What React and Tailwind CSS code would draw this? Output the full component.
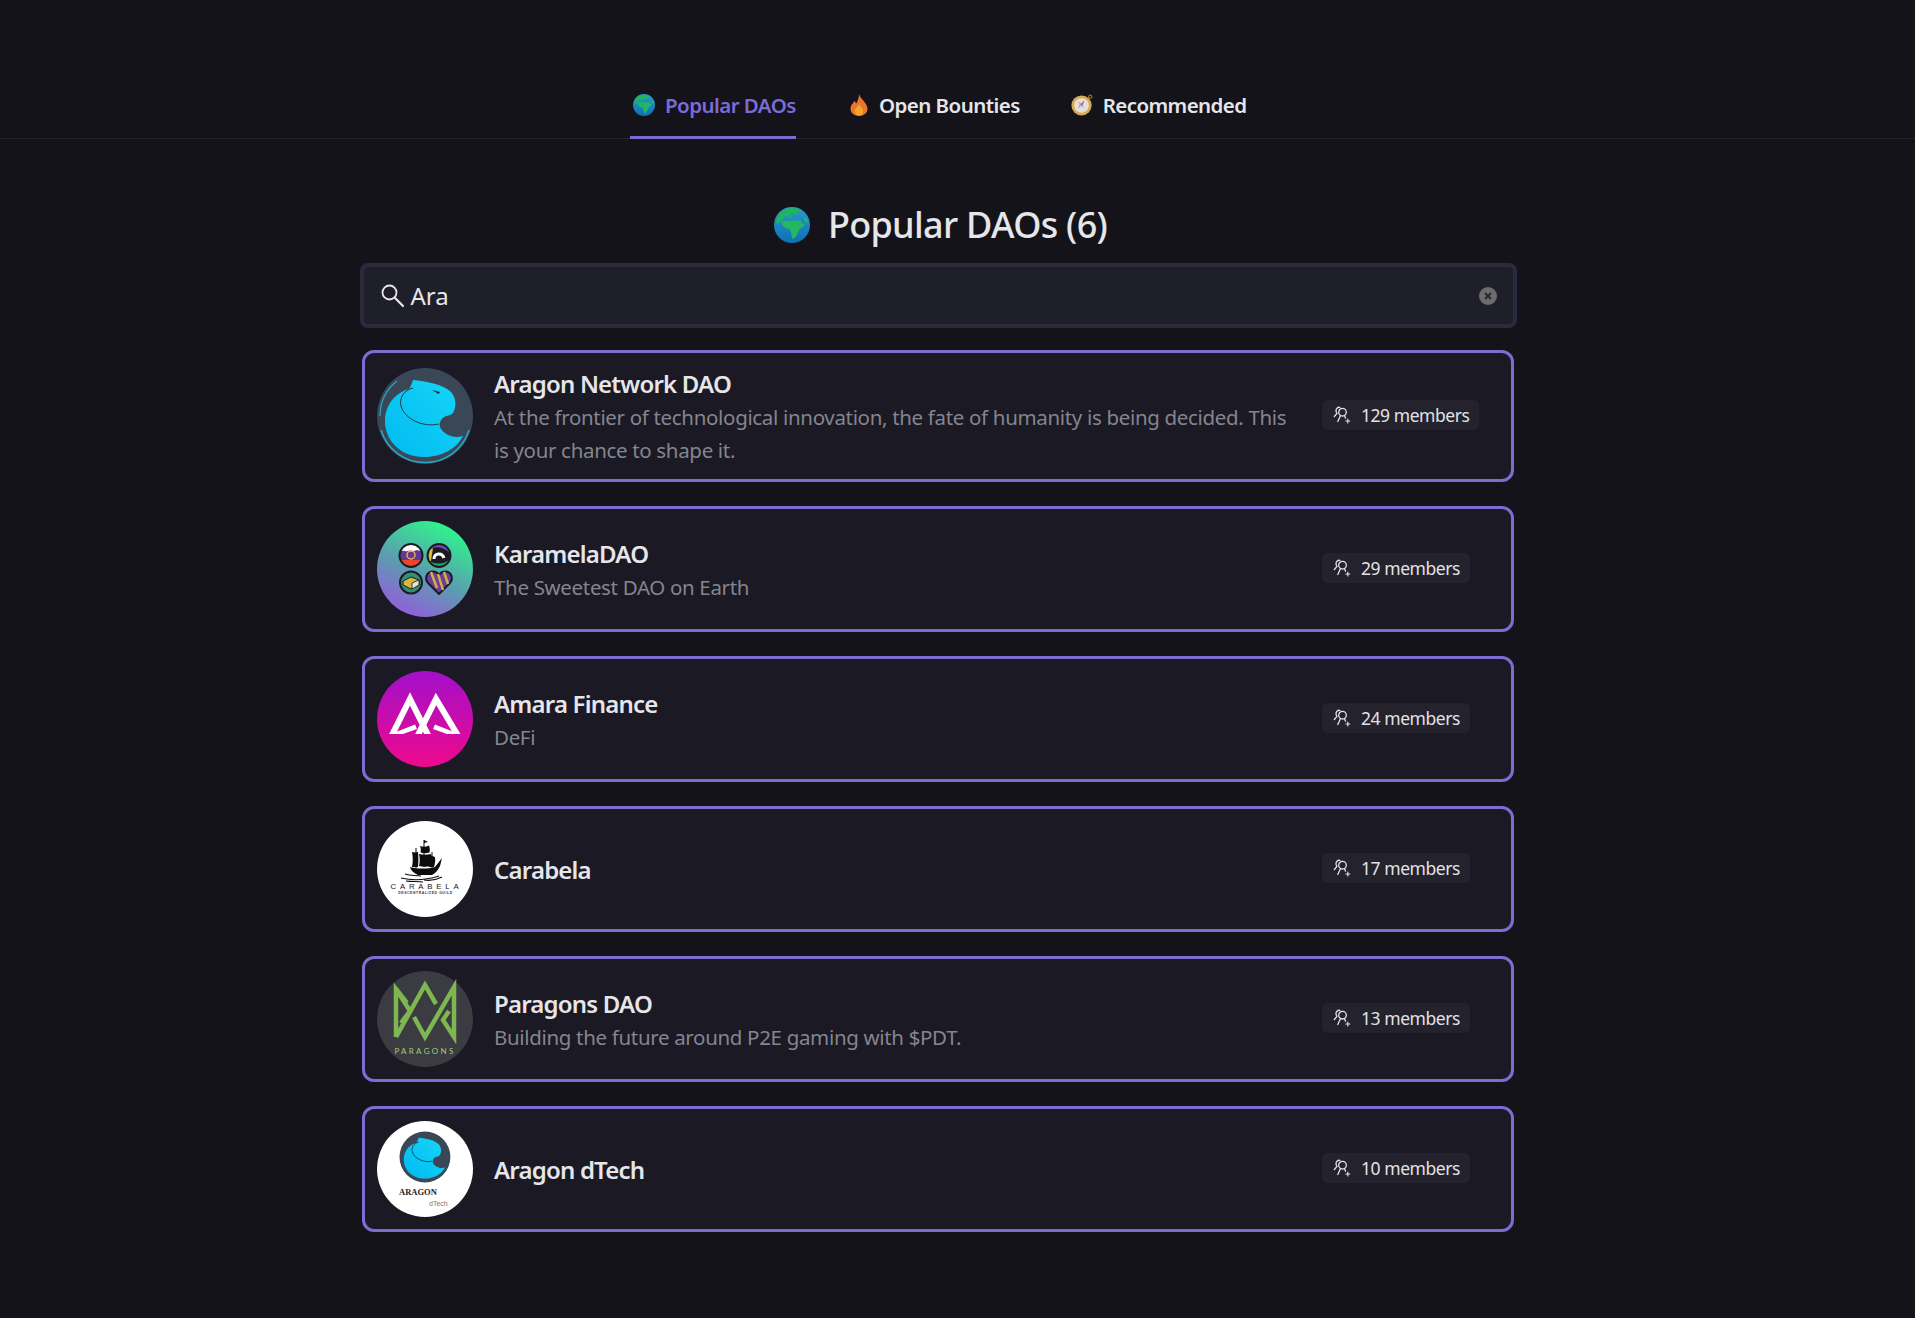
const GlobeIcon = ({ className }) => (
  <svg className={className} viewBox="0 0 36 36">
    <defs>
      <linearGradient id="ocean" x1="0" y1="0" x2="0" y2="1">
        <stop offset="0" stopColor="#2a9ad0" />
        <stop offset="1" stopColor="#0f6fb5" />
      </linearGradient>
    </defs>
    <circle cx="18" cy="18" r="18" fill="url(#ocean)" />
    <path d="M9 3.5C13 1 20 0 26 2.5L27 5l-3 .5L22 8l-4-1.500-1.500 1.500 2 2-4 1-1.500-2-3 1-1 3-4 2.500L2 17C2 11 5 6 9 3.500Z" fill="#1fb45f" />
    <path d="M7 15l5-1.500 5 .5 3-1 4 1 2.500-1 1 3 3 1-1.500 3-3 1-2 5-3 5-2.500 1-1.500-6-1-4-4-.5-3.500-3Z" fill="#22b85f" />
    <path d="M30 10l3 2 1.500 4-2.500-.5-2-2.500Z" fill="#22b85f" />
  </svg>
)

const FireIcon = ({ className }) => (
  <svg className={className} viewBox="0 0 20 26">
    <path d="M10 0c1 4 4 6 6.500 9.500C19 13 20 15.500 20 17.500 20 22.500 15.500 26 10 26S0 22.500 0 17.500C0 13 3 11 5 8c.5 1.500 1 2.500 2 3C8.500 8 10 4 10 0Z" fill="#e8762c" />
    <path d="M10 12c1 2.500 5 5 5 8.500 0 3-2.200 5-5 5s-5-2-5-5c0-3.500 4-5.500 5-8.500Z" fill="#f7a32c" />
  </svg>
)

const CompassIcon = ({ className }) => (
  <svg className={className} viewBox="0 0 24 24">
    <circle cx="21" cy="3" r="1.800" fill="none" stroke="#c89a3a" strokeWidth="1" />
    <circle cx="11.500" cy="12.500" r="11" fill="#d9ab4f" />
    <circle cx="11.500" cy="12.500" r="8" fill="#e4e0dc" />
    <path d="M14.500 7l-2 5.500 2.500 3-4-2.500-3.500 3 2-5-2.500-3 4 2Z" fill="#a9a7ae" />
    <path d="M14.500 7l-3.500 4.500 1.500 1Z" fill="#c0436a" />
  </svg>
)

const MembersIcon = () => (
  <svg className="w-[18px] h-[18px] shrink-0" viewBox="0 0 18 18" fill="none" stroke="#e4e4e8" strokeWidth="1.300" strokeLinecap="round" strokeLinejoin="round">
    <circle cx="9.500" cy="6.200" r="3.800" />
    <path d="M7.500 9.500L4.800 15.500M11.500 9.500l1 2.700" />
    <path d="M6.800 1.300C4.500 1 2.800 2.800 3 5c.1 1 .5 1.700 1 2.300L1.300 10.500" />
    <path d="M14.800 13v4M12.800 15h4" strokeWidth="1.100" />
  </svg>
)

const AragonLogo = () => (
  <svg className="w-24 h-24 shrink-0" viewBox="0 0 96 96">
    <defs>
      <linearGradient id="aragonBody" x1="1" y1="0" x2="0" y2="1">
        <stop offset="0" stopColor="#16d6f6" />
        <stop offset="1" stopColor="#00b9f2" />
      </linearGradient>
    </defs>
    <circle cx="48" cy="48" r="48" fill="#3a4756" />
    <path d="M4 62A46 46 0 0 0 92 62" fill="none" stroke="#27a9c6" strokeWidth="1.500" />
    <path d="M3 48A45 45 0 0 1 20 13" fill="none" stroke="#27a9c6" strokeWidth="1.200" />
    <path d="M36 12C48 13 66 16 74 24C79 30 80 38 76 45C74 47 71 48 69 48C64 50 62 55 63 59C66 66 76 71 86 68C80 80 66 89 47 89C24 89 8 73 8 53C8 37 18 25 32 21C34 18 35 15 36 12Z" fill="url(#aragonBody)" />
    <path d="M36 20C27 22 22 30 24 38C27 50 45 60 62 56" fill="none" stroke="#1e2b3a" strokeWidth="0.900" />
    <circle cx="71" cy="56" r="7.500" fill="#3a4756" />
    <path d="M55 22l8 2-1.500 2Z" fill="#1e2b3a" />
  </svg>
)

const KaramelaLogo = () => (
  <svg className="w-24 h-24 shrink-0" viewBox="0 0 96 96">
    <defs>
      <linearGradient id="karamelaBg" x1="0.75" y1="0.05" x2="0.3" y2="0.95">
        <stop offset="0" stopColor="#2ef58c" />
        <stop offset="0.55" stopColor="#5a9fae" />
        <stop offset="1" stopColor="#8f62d8" />
      </linearGradient>
      <clipPath id="k1"><circle cx="34" cy="34.500" r="11" /></clipPath>
      <clipPath id="k2"><circle cx="62" cy="34.500" r="11" /></clipPath>
    </defs>
    <circle cx="48" cy="48" r="48" fill="url(#karamelaBg)" />
    <g clipPath="url(#k1)">
      <rect x="22" y="22" width="24" height="24" fill="#5f3a92" />
      <path d="M22 22h24v7c-3 2-4 0-6 0s-3 2-6 1-4 1-6 0-3 1-6-1Z" fill="#fff" />
      <rect x="22" y="39" width="24" height="8" fill="#e8452c" />
      <circle cx="34" cy="34" r="4" fill="none" stroke="#f2a65a" strokeWidth="1.500" />
    </g>
    <circle cx="34" cy="34.500" r="11.500" fill="none" stroke="#1b1a24" strokeWidth="2" />
    <g clipPath="url(#k2)">
      <rect x="50" y="22" width="24" height="24" fill="#1b1a24" />
      <path d="M50 31C56 24 66 25 74 33L74 22L50 22Z" fill="#7a45b8" />
      <path d="M50 30L56 27 54 40 50 40Z" fill="#d6b93f" />
      <path d="M50 39C58 44 68 44 74 37L74 48L50 48Z" fill="#22a060" />
      <path d="M57 38c0-6 8-7 10-1" fill="none" stroke="#fff" strokeWidth="3" />
    </g>
    <circle cx="62" cy="34.500" r="11.500" fill="none" stroke="#1b1a24" strokeWidth="2" />
    <circle cx="34" cy="61.500" r="11" fill="#2f8f77" stroke="#1b1a24" strokeWidth="2" />
    <path d="M26 60l8-4 8 3v5l-8 4-8-4Z" fill="#d9b53a" stroke="#1b1a24" strokeWidth="1" />
    <path d="M35 62l7-3v5l-7 4Z" fill="#e9e4d0" stroke="#1b1a24" strokeWidth="0.800" />
    <path d="M62 73L51 62C47 57 50 51 55 50.500C58 50.300 60.500 51.500 62 54C63.500 51.500 66 50.300 69 50.500C74 51 77 57 73 62Z" fill="#6a3ea0" stroke="#1b1a24" strokeWidth="2" strokeLinejoin="round" />
    <path d="M54 51l6 16M61 53l5 16M67 51l4 12" stroke="#d2b03c" strokeWidth="2.500" />
  </svg>
)

const AmaraLogo = () => (
  <svg className="w-24 h-24 shrink-0" viewBox="0 0 96 96">
    <defs>
      <linearGradient id="amaraBg" x1="0" y1="0" x2="0" y2="1">
        <stop offset="0" stopColor="#a30fcb" />
        <stop offset="1" stopColor="#ee0a8c" />
      </linearGradient>
      <clipPath id="amaraFeet"><rect x="0" y="0" width="96" height="63" /></clipPath>
    </defs>
    <circle cx="48" cy="48" r="48" fill="url(#amaraBg)" />
    <g fill="none" stroke="#fff" strokeWidth="6" clipPath="url(#amaraFeet)">
      <path d="M13 68L33 28L53 68" />
      <path d="M39 68L59 28L83 68" />
    </g>
    <path d="M14 63L38 53.500L40 58L26 63ZM82 63L58 53.500L56 58L70 63Z" fill="#fff" />
  </svg>
)

const CarabelaLogo = () => (
  <svg className="w-24 h-24 shrink-0" viewBox="0 0 96 96">
    <circle cx="48" cy="48" r="48" fill="#fff" />
    <g fill="#0c0c0c">
      <path d="M46.500 19h1v27h-1ZM38.500 27h1v20h-1ZM54.500 31h1v16h-1Z" />
      <path d="M47 19l4 2-4 1Z" />
      <path d="M43 25c3 1 6 1 9-.5 1 3 1 5 .5 7-3 1-6 1-9 0 .5-2 .5-4-.5-6.500Z" />
      <path d="M42 33c4 1 8 1 12 0 1 4 1 8 0 12-4 1-8 1-12 0 1-4 1-8 0-12Z" />
      <path d="M35 31c2 .5 4 .5 6 0 .5 4 .5 10 0 15h-6c1-5 1-10 0-15Z" />
      <path d="M52 34l6 2c.5 3 0 7-1 10h-5Z" />
      <path d="M33 46c8 2 18 2 25 0l7-9-2 8c-2 4-4 7-8 9H41c-4-2-7-4-8-8Z" />
    </g>
    <path d="M28 53c6 2 11 1 16 2M24 57c8 2 22 3 38-2M29 60c6 1 11 0 17 1M47 59c6 1 12 0 18-3" fill="none" stroke="#0c0c0c" strokeWidth="1.100" />
    <text x="49.500" y="67.500" textAnchor="middle" fontFamily="Liberation Sans, sans-serif" fontSize="7.800" letterSpacing="3.800" fill="#161616">CARABELA</text>
    <text x="48.500" y="72.800" textAnchor="middle" fontFamily="Liberation Sans, sans-serif" fontSize="3.400" letterSpacing="0.600" fontWeight="700" fill="#333">DESCENTRALIZED GUILD</text>
  </svg>
)

const ParagonsLogo = () => (
  <svg className="w-24 h-24 shrink-0" viewBox="0 0 96 96">
    <circle cx="48" cy="48" r="48" fill="#3b3b42" />
    <g fill="none" stroke="#7eb650" strokeWidth="4.500" strokeLinejoin="miter">
      <path d="M30 32L19 18V66" />
      <path d="M19 66L48 14L59 33" />
      <path d="M19 18L33 40L24 52" />
      <path d="M37 46L48 66L77 16V66L66 49L72 40" />
    </g>
    <text x="48" y="83" textAnchor="middle" fontFamily="Lato, sans-serif" fontSize="8" letterSpacing="2.300" fill="#a9ca74">PARAGONS</text>
  </svg>
)

const DTechLogo = () => (
  <svg className="w-24 h-24 shrink-0" viewBox="0 0 96 96">
    <defs>
      <linearGradient id="aragonBody2" x1="1" y1="0" x2="0" y2="1">
        <stop offset="0" stopColor="#16d6f6" />
        <stop offset="1" stopColor="#00b9f2" />
      </linearGradient>
    </defs>
    <circle cx="48" cy="48" r="48" fill="#fff" />
    <g transform="translate(22.500 10.500) scale(0.53)">
      <circle cx="48" cy="48" r="48" fill="#3a4756" />
      <path d="M36 12C48 13 66 16 74 24C79 30 80 38 76 45C74 47 71 48 69 48C64 50 62 55 63 59C66 66 76 71 86 68C80 80 66 89 47 89C24 89 8 73 8 53C8 37 18 25 32 21C34 18 35 15 36 12Z" fill="url(#aragonBody2)" />
      <path d="M36 20C27 22 22 30 24 38C27 50 45 60 62 56" fill="none" stroke="#1e2b3a" strokeWidth="1.500" />
      <circle cx="71" cy="56" r="7.500" fill="#3a4756" />
    </g>
    <text x="22" y="74" fontFamily="Liberation Serif, serif" fontSize="8.500" fontWeight="700" fill="#222">ARAGON</text>
    <text x="52" y="85" fontFamily="Liberation Sans, sans-serif" fontSize="7" fill="#777">dTech</text>
  </svg>
)

const daos = [
  { name: 'Aragon Network DAO', desc: 'At the frontier of technological innovation, the fate of humanity is being decided. This is your chance to shape it.', members: 129, Logo: AragonLogo },
  { name: 'KaramelaDAO', desc: 'The Sweetest DAO on Earth', members: 29, Logo: KaramelaLogo },
  { name: 'Amara Finance', desc: 'DeFi', members: 24, Logo: AmaraLogo },
  { name: 'Carabela', members: 17, Logo: CarabelaLogo },
  { name: 'Paragons DAO', desc: 'Building the future around P2E gaming with $PDT.', members: 13, Logo: ParagonsLogo },
  { name: 'Aragon dTech', members: 10, Logo: DTechLogo },
]

const DaoCard = ({ dao }) => {
  const { Logo } = dao
  return (
    <div className="flex items-center border-[3px] border-[#7d6dd3] rounded-xl bg-[#1a1924] p-3">
      <Logo />
      <div className="flex-1 min-w-0 ml-[21px] mr-[22px]">
        <div className="text-[24px] leading-[36px] font-semibold text-[#e6e6ea] tracking-[-0.8px] translate-y-px">{dao.name}</div>
        {dao.desc && <p className="text-[20.500px] leading-[33px] text-[#85858e] tracking-[-0.33px]">{dao.desc}</p>}
      </div>
      <div className="w-[177px] shrink-0 flex mb-[2px]">
        <div className="flex items-center gap-[10px] h-[30px] pl-[11px] pr-[10px] rounded-md bg-[#23222d] text-[17.500px] tracking-[-0.45px] text-[#e2e2e6]">
          <MembersIcon />
          <span>{dao.members} members</span>
        </div>
      </div>
    </div>
  )
}

export default function App() {
  return (
    <div className="min-h-[1318px] bg-[#131319] font-['Noto_Sans',sans-serif]">
      {/* Tabs */}
      <nav className="h-[139px] border-b border-[#24242c] flex items-end pl-[630px]">
        <div className="flex items-center gap-[10px] h-[68px] w-[166px] pl-[3px] pt-[3px] border-b-[3px] border-[#7b6bd1] -mb-px text-[20.500px] font-semibold text-[#7b6bd9] tracking-[-0.55px] whitespace-nowrap">
          <GlobeIcon className="w-[22px] h-[22px] shrink-0" />
          <span>Popular DAOs</span>
        </div>
        <div className="flex items-center gap-[11px] h-[68px] ml-[54px] -mb-px text-[20.500px] font-semibold text-[#e6e6ea] tracking-[-0.55px] whitespace-nowrap">
          <FireIcon className="w-[18px] h-[22px] shrink-0" />
          <span>Open Bounties</span>
        </div>
        <div className="flex items-center gap-[10px] h-[68px] ml-[51px] -mb-px text-[20.500px] font-semibold text-[#e6e6ea] tracking-[-0.6px] whitespace-nowrap">
          <CompassIcon className="w-[22px] h-[22px] shrink-0" />
          <span>Recommended</span>
        </div>
      </nav>

      {/* Main column sits left of centre, the page reserves room on the right */}
      <main className="pr-[39px]">
        <h1 className="mt-[62px] ml-[5px] flex justify-center items-center gap-[18px] text-[36px] leading-[48px] font-medium text-[#e6e6ea] tracking-[-0.7px]">
          <GlobeIcon className="w-[36px] h-[36px]" />
          <span>Popular DAOs (6)</span>
        </h1>

        {/* Search */}
        <div className="w-[1157px] h-[65px] mx-auto mt-[14px] flex items-center border-4 border-[#2c2a3e] rounded-lg bg-[#1f1f29] pl-4 pr-4">
          <svg className="w-[25px] h-[25px] shrink-0" viewBox="0 0 25 25" fill="none" stroke="#e6e6ea" strokeWidth="1.800" strokeLinecap="round">
            <circle cx="9.500" cy="9.500" r="7" />
            <path d="M14.800 14.800L23 23" strokeWidth="2.200" />
          </svg>
          <span className="ml-[6px] flex-1 text-[24px] text-[#e6e6ea]">Ara</span>
          <div className="w-[18px] h-[18px] rounded-full bg-[#6b6b70] flex items-center justify-center">
            <svg className="w-2.5 h-2.5" viewBox="0 0 10 10" stroke="#25252c" strokeWidth="1.800">
              <path d="M2 2l6 6M8 2l-6 6" />
            </svg>
          </div>
        </div>

        {/* DAO list */}
        <div className="w-[1152px] mx-auto mt-[22px] flex flex-col gap-6 pb-[86px]">
          {daos.map((dao) => (
            <DaoCard key={dao.name} dao={dao} />
          ))}
        </div>
      </main>
    </div>
  )
}
